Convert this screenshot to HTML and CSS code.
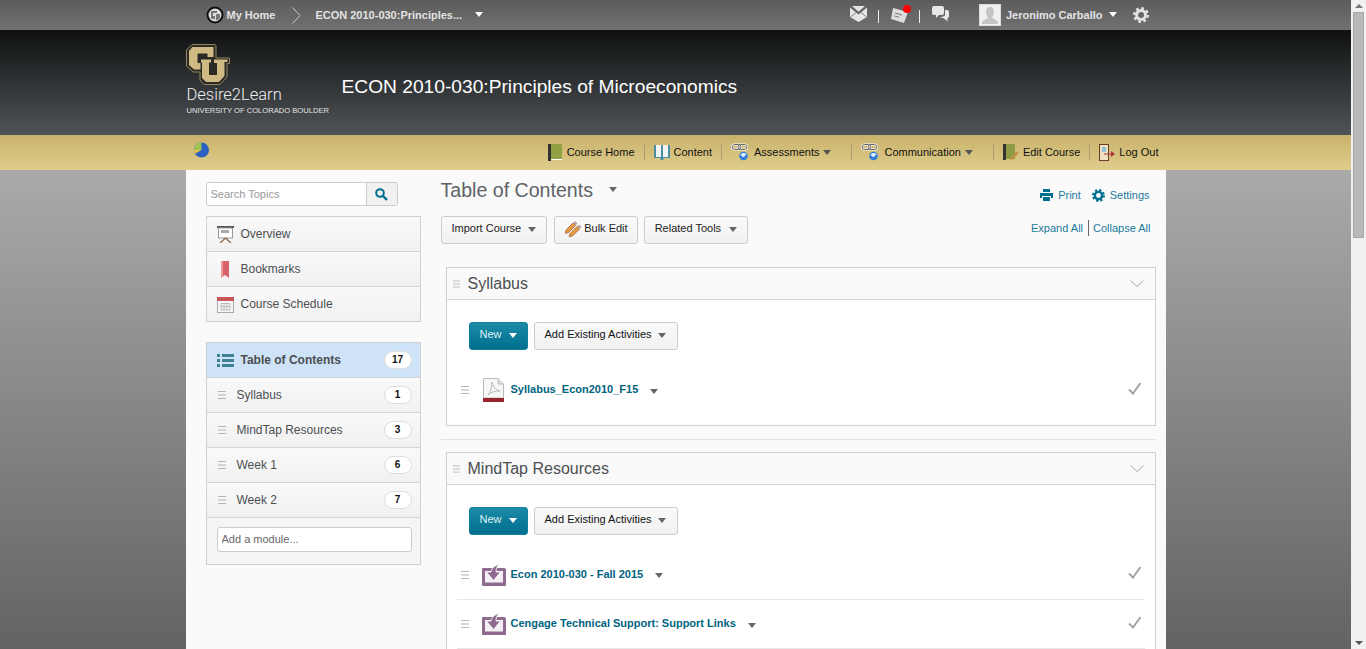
FILE: index.html
```html
<!DOCTYPE html>
<html>
<head>
	<meta charset="utf-8">
	<title>Table of Contents - ECON 2010-030:Principles of Microeconomics</title>
	<link rel="stylesheet" href="styles.css">
</head>
<body>

<svg class="defs" width="0" height="0">
	<symbol id="ico-handle" viewBox="0 0 8 8"><path d="M0 .5H8M0 4H8M0 7.500H8" stroke="#b5b5b5" fill="none"/></symbol>
	<symbol id="ico-check" viewBox="0 0 14 13"><path d="M1 7.500L5 11.500L12.500 1" stroke="#a3a3a3" stroke-width="2" fill="none"/></symbol>
	<symbol id="ico-chevron" viewBox="0 0 14 8"><path d="M.5 .5L7 6.500L13.500 .5" stroke="#a8a8a8" fill="none"/></symbol>
	<symbol id="ico-import" viewBox="0 0 24 22">
		<path d="M1 4H22Q24 4 24 6V21Q24 22 23 22H1Q0 22 0 21V5Q0 4 1 4Z" fill="#8f6a8f"/>
		<rect x="3" y="7" width="18" height="11.500" fill="#f4eff4"/>
		<path d="M17.500 0C12 2 9 5 9 8H4.500L11.500 16.500L18.500 8H14C14 5 15 2 17.500 0Z" fill="#8f6a8f" stroke="#fff" stroke-width=".8"/>
	</symbol>
	<symbol id="ico-chain" viewBox="0 0 18 20">
		<rect x="1" y="2.500" width="9" height="5" rx="2.500" fill="none" stroke="#fff" stroke-width="2"/>
		<rect x="7" y="2.500" width="9" height="5" rx="2.500" fill="none" stroke="#fff" stroke-width="2"/>
		<rect x="7" y="2.500" width="9" height="5" rx="2.500" fill="none" stroke="#666"/>
		<rect x="1" y="2.500" width="9" height="5" rx="2.500" fill="none" stroke="#666"/>
		<circle cx="12.500" cy="14" r="4.300" fill="#2f7fd6"/>
		<path d="M9.500 13C11 10.500 14 10.500 15.500 12.500C14 12.500 14 15 12.500 15C11 15 11 14 9.500 13Z" fill="#dfefff"/>
	</symbol>
	<symbol id="ico-gear" viewBox="0 0 16 16">
		<circle cx="8" cy="8" r="4.500" fill="none" stroke="currentColor" stroke-width="3"/>
		<circle cx="8" cy="8" r="6.800" fill="none" stroke="currentColor" stroke-width="2.400" stroke-dasharray="2.800 2.540"/>
	</symbol>
</svg>

<div class="scroll-falso">
	<span class="scroll-sube"></span>
	<span class="scroll-mango"></span>
	<span class="scroll-baja"></span>
</div>

<div class="barra-top">
	<div class="ancho barra-top-in">
		<span class="logo-home">
			<svg width="18" height="18" viewBox="0 0 18 18"><circle cx="9" cy="9" r="8.500" fill="#111"/><circle cx="9" cy="9" r="6.500" fill="#ddd"/><path d="M5 5H11V7H7V10H9V13H6L5 12ZM9 8H14V12L12 14H10V8Z" fill="#777"/></svg>
		</span>
		<span class="top-link mi-home">My Home</span>
		<svg class="top-sep" width="9" height="17" viewBox="0 0 9 17"><path d="M.5 .5L8 8.500L.5 16.500" stroke="#ccc" fill="none"/></svg>
		<span class="top-link curso">ECON 2010-030:Principles...</span>
		<span class="flecha flecha-blanca flecha-curso"></span>

		<div class="top-der">
			<svg class="ico-sobre" width="17" height="16" viewBox="0 0 17 16"><path d="M0 1.500L8.500 8.500L17 1.500V11L8.500 16L0 11Z M2 0H15L8.500 5.800Z" fill="#e6e6e6"/><path d="M.5 11L6 6.500M16.500 11L11 6.500" stroke="#666" stroke-width=".8"/></svg>
			<span class="barrita"></span>
			<span class="ico-aviso">
				<svg width="20" height="17" viewBox="0 0 20 17"><path d="M2 2L17 6L13 17L0 13Z" fill="#dedede"/><path d="M4 7L11 9M3.500 10L8 11.300" stroke="#777"/></svg>
				<span class="punto-rojo"></span>
			</span>
			<span class="barrita"></span>
			<svg class="ico-chat" width="17" height="16" viewBox="0 0 17 16"><path d="M2 0H10Q12 0 12 2V7Q12 9 10 9H7L4 12V9H2Q0 9 0 7V2Q0 0 2 0Z" fill="#e6e6e6"/><path d="M13 4H15Q17 4 17 6V10Q17 12 15.500 12V15.500L11.500 12H8L13 9.500Z" fill="#e6e6e6"/></svg>
			<span class="avatar">
				<svg width="20" height="20" viewBox="0 0 20 20"><path d="M10 2C13 2 14 4 14 7C14 10 12 12 12 13C14 14 17 15 18 17V19H2V17C3 15 6 14 8 13C8 12 6 10 6 7C6 4 7 2 10 2Z" fill="#c4c4c4"/></svg>
			</span>
			<span class="top-link nombre">Jeronimo Carballo</span>
			<span class="flecha flecha-blanca flecha-nombre"></span>
			<svg class="ico-tuerca" width="16" height="16"><use href="#ico-gear"/></svg>
		</div>
	</div>
</div>

<div class="cabecera">
	<div class="ancho cabecera-in">
		<div class="marca">
			<svg class="cu" width="44" height="41" viewBox="0 0 44 41">
				<path d="M6 .5H29L30 2V14H43.500V19.500H41V33L34 40.500H18L14 36V28H7L.5 22V6Z" fill="#2b2a27" stroke="#94875f"/>
				<path d="M6.500 3H27.500V13H21.500V9.500H11.500V19H14.500V25.500H8L3 21V7Z" fill="#cfba83"/>
				<path d="M15 15.500H25V18.500H23V31H31V19H28V15.500H41.500V18H38.500V32L33 38H20L16 34V18.500H15Z" fill="#cfba83"/>
			</svg>
			<div class="marca-nombre">Desire2Learn</div>
			<div class="marca-uni">UNIVERSITY OF COLORADO BOULDER</div>
		</div>
		<div class="titulo-curso">ECON 2010-030:Principles of Microeconomics</div>
	</div>
</div>

<div class="nav">
	<div class="ancho nav-in">
		<svg class="pastel" width="17" height="16" viewBox="0 0 17 16"><circle cx="8.500" cy="8" r="7.500" fill="#2b5fc0"/><path d="M8.500 8V.5A7.500 7.500 0 0 0 1 8Z" fill="#9bc453"/><path d="M8.500 8H1A7.500 7.500 0 0 0 2 11.700Z" fill="#e8c04a"/></svg>
		<ul class="nav-lista">
			<li class="nav-item">
				<svg class="nav-libro" width="14" height="17" viewBox="0 0 14 17"><rect width="14" height="16" fill="#93a044"/><rect width="3" height="17" fill="#333"/><rect x="3" y="15" width="11" height="1" fill="#fff"/></svg>
				Course Home
			</li>
			<li class="nav-item">
				<svg width="16" height="16" viewBox="0 0 16 16"><path d="M0 1H16V14H9.500V16H6.500V14H0Z" fill="#4d8ea6"/><path d="M2 1H7V13H2ZM9 1H14V13H9Z" fill="#f3f3f3"/></svg>
				Content
			</li>
			<li class="nav-item">
				<svg width="18" height="20"><use href="#ico-chain"/></svg>
				<span class="nav-txt-ico">Assessments</span>
				<span class="flecha flecha-nav"></span>
			</li>
			<li class="nav-item">
				<svg width="18" height="20"><use href="#ico-chain"/></svg>
				<span class="nav-txt-ico">Communication</span>
				<span class="flecha flecha-nav"></span>
			</li>
			<li class="nav-item">
				<svg width="16" height="17" viewBox="0 0 16 17"><rect width="12" height="15" fill="#8d9c43"/><rect width="3" height="16" fill="#333"/><path d="M7 15L14 7L16 9L9 16Z" fill="#c8914a"/></svg>
				Edit Course
			</li>
			<li class="nav-item">
				<svg width="16" height="17" viewBox="0 0 16 17"><rect x=".5" y=".5" width="9" height="16" fill="#eee0c0" stroke="#6b3b2a"/><rect x="3" y="3" width="4" height="5" fill="#8fc3d6"/><path d="M5 9.500H12V7L16 10L12 13V10.500H5Z" fill="#b3303c"/></svg>
				Log Out
			</li>
		</ul>
	</div>
</div>

<div class="fondo">
	<div class="ancho pagina">

		<div class="lateral">
			<div class="buscador">
				<input class="buscador-txt" type="text" placeholder="Search Topics">
				<span class="buscador-btn">
					<svg width="13" height="13" viewBox="0 0 13 13"><circle cx="5" cy="5" r="3.800" fill="none" stroke="#00708f" stroke-width="2"/><path d="M8 8L12 12" stroke="#00708f" stroke-width="2.400"/></svg>
				</span>
			</div>

			<ul class="caja-lateral">
				<li class="fila">
					<svg class="fila-ico" width="17" height="17" viewBox="0 0 17 17"><rect width="17" height="2" fill="#555"/><rect x="1.500" y="2" width="14" height="10" fill="#fff" stroke="#999"/><rect x="4" y="4" width="8" height="3" fill="#aaa"/><path d="M8.500 12L3 17M8.500 12L14 17" stroke="#8a6a50" stroke-width="1.300"/></svg>
					Overview
				</li>
				<li class="fila">
					<svg class="fila-ico" width="17" height="17" viewBox="0 0 17 17"><path d="M4 0H12V17L8 14L4 17Z" fill="#d9626a"/><path d="M4 0H6V15.500L4 17Z" fill="#e99"/></svg>
					Bookmarks
				</li>
				<li class="fila">
					<svg class="fila-ico" width="17" height="17" viewBox="0 0 17 17"><rect x=".5" y="1.500" width="16" height="15" fill="#f6f6f6" stroke="#aaa"/><rect y="1" width="17" height="4" fill="#c9565b"/><path d="M4 7.500H13V14H4ZM7 7.500V14M10 7.500V14M4 10.500H13" fill="none" stroke="#bbb"/></svg>
					Course Schedule
				</li>
			</ul>

			<ul class="caja-lateral caja-modulos">
				<li class="fila fila-toc">
					<svg class="fila-ico" width="17" height="13" viewBox="0 0 17 13"><path d="M0 0H3V3H0ZM0 5H3V8H0ZM0 10H3V13H0ZM5 0H17V3H5ZM5 5H17V8H5ZM5 10H17V13H5Z" fill="#3f8294"/></svg>
					<span class="fila-nombre">Table of Contents</span>
					<span class="cuenta">17</span>
				</li>
				<li class="fila fila-mod">
					<svg class="asa" width="8" height="8"><use href="#ico-handle"/></svg>
					<span class="fila-nombre">Syllabus</span>
					<span class="cuenta">1</span>
				</li>
				<li class="fila fila-mod">
					<svg class="asa" width="8" height="8"><use href="#ico-handle"/></svg>
					<span class="fila-nombre">MindTap Resources</span>
					<span class="cuenta">3</span>
				</li>
				<li class="fila fila-mod">
					<svg class="asa" width="8" height="8"><use href="#ico-handle"/></svg>
					<span class="fila-nombre">Week 1</span>
					<span class="cuenta">6</span>
				</li>
				<li class="fila fila-mod">
					<svg class="asa" width="8" height="8"><use href="#ico-handle"/></svg>
					<span class="fila-nombre">Week 2</span>
					<span class="cuenta">7</span>
				</li>
				<li class="fila-nuevo">
					<input class="nuevo-txt" type="text" placeholder="Add a module...">
				</li>
			</ul>
		</div>

		<div class="principal">
			<div class="princ-cab">
				<h1 class="princ-titulo">Table of Contents</h1>
				<span class="flecha flecha-titulo"></span>
				<div class="princ-acciones">
					<svg width="13" height="12" viewBox="0 0 13 12"><path d="M3 0H10V3H3ZM0 4H13V9H11V7H2V9H0ZM3 8H10V12H3Z" fill="#00708f"/></svg>
					<a class="enlace enlace-print">Print</a>
					<svg class="ico-ajustes" width="13" height="13" viewBox="0 0 16 16"><use href="#ico-gear"/></svg>
					<a class="enlace">Settings</a>
				</div>
			</div>

			<div class="princ-botones">
				<span class="boton boton-import">Import Course <span class="flecha flecha-boton"></span></span>
				<span class="boton boton-bulk">
					<svg width="17" height="17" viewBox="0 0 17 17">
						<path d="M1 10L8 3L10.500 5.500L3.500 12.500L0 13.500Z" fill="#e29a3c" stroke="#a8563a" stroke-width=".7"/>
						<path d="M8 3L10 1L12.500 3.500L10.500 5.500Z" fill="#b9a0a0"/>
						<path d="M5 13.500L12 6.500L14.500 9L7.500 16L4 17Z" fill="#e29a3c" stroke="#a8563a" stroke-width=".7"/>
						<path d="M12 6.500L14 4.500L16.500 7L14.500 9Z" fill="#b9a0a0"/>
					</svg>
					Bulk Edit
				</span>
				<span class="boton boton-rel">Related Tools <span class="flecha flecha-boton"></span></span>
				<div class="expandir">
					<a class="enlace">Expand All</a>
					<span class="expandir-sep"></span>
					<a class="enlace">Collapse All</a>
				</div>
			</div>

			<div class="modulo">
				<div class="modulo-cab">
					<svg class="asa-cab" width="7" height="8"><use href="#ico-handle"/></svg>
					<h2 class="modulo-titulo">Syllabus</h2>
					<svg class="modulo-abrir" width="14" height="8"><use href="#ico-chevron"/></svg>
				</div>
				<div class="modulo-cuerpo">
					<div class="modulo-botones">
						<span class="boton boton-nuevo">New <span class="flecha flecha-blanca flecha-boton"></span></span>
						<span class="boton boton-negro">Add Existing Activities <span class="flecha flecha-boton"></span></span>
					</div>
					<div class="tema tema-pdf">
						<svg class="asa" width="8" height="8"><use href="#ico-handle"/></svg>
						<svg class="tema-ico" width="21" height="24" viewBox="0 0 21 24"><path d="M.5 .5H15L20.500 6V20H.5Z" fill="#f7f7f7" stroke="#bbb"/><path d="M15 .5V6H20.500" fill="#ddd" stroke="#bbb"/><path d="M5 17C8 14 9 8 9 4C10 9 13 12 17 13C12 13 8 14 5 17Z" fill="none" stroke="#bbb"/><rect y="20" width="21" height="4" fill="#98252b"/></svg>
						<a class="tema-nombre">Syllabus_Econ2010_F15</a>
						<span class="flecha flecha-tema"></span>
						<svg class="tema-check" width="14" height="13"><use href="#ico-check"/></svg>
					</div>
				</div>
			</div>

			<div class="separador"></div>

			<div class="modulo">
				<div class="modulo-cab">
					<svg class="asa-cab" width="7" height="8"><use href="#ico-handle"/></svg>
					<h2 class="modulo-titulo">MindTap Resources</h2>
					<svg class="modulo-abrir" width="14" height="8"><use href="#ico-chevron"/></svg>
				</div>
				<div class="modulo-cuerpo">
					<div class="modulo-botones">
						<span class="boton boton-nuevo">New <span class="flecha flecha-blanca flecha-boton"></span></span>
						<span class="boton boton-negro">Add Existing Activities <span class="flecha flecha-boton"></span></span>
					</div>
					<div class="tema tema-lista">
						<svg class="asa" width="8" height="8"><use href="#ico-handle"/></svg>
						<svg class="tema-ico tema-ico-imp" width="24" height="22"><use href="#ico-import"/></svg>
						<a class="tema-nombre">Econ 2010-030 - Fall 2015</a>
						<span class="flecha flecha-tema"></span>
						<svg class="tema-check" width="14" height="13"><use href="#ico-check"/></svg>
					</div>
					<div class="tema tema-lista">
						<svg class="asa" width="8" height="8"><use href="#ico-handle"/></svg>
						<svg class="tema-ico tema-ico-imp" width="24" height="22"><use href="#ico-import"/></svg>
						<a class="tema-nombre">Cengage Technical Support: Support Links</a>
						<span class="flecha flecha-tema"></span>
						<svg class="tema-check" width="14" height="13"><use href="#ico-check"/></svg>
					</div>
				</div>
			</div>
		</div>

	</div>
</div>

</body>
</html>
```

FILE: styles.css
```css
*{box-sizing: border-box;}
html{height: 100%; background: #666;}
body{
	margin: 0 15px 0 0;
	font-family: "Liberation Sans", Arial, sans-serif;
	font-size: 12px;
	color: #565a5c;
}
ul{list-style: none; margin: 0; padding: 0;}
h1, h2{margin: 0; font-weight: normal;}
svg{display: block; flex: none;}
.defs{position: absolute;}

/* barra de scroll, va encima de todo */
.scroll-falso{
	position: fixed;
	top: 0;
	right: 0;
	bottom: 0;
	width: 15px;
	background: #f1f1f1;
	display: flex;
	flex-direction: column;
	align-items: center;
}
.scroll-sube{margin-top: 4px; border-style: solid; border-width: 0 4px 4px; border-color: transparent transparent #777;}
.scroll-mango{width: 11px; height: 226px; margin-top: 4px; background: #b9b9b9; border: 1px solid #a8a8a8;}
.scroll-baja{margin-top: auto; margin-bottom: 4px; border-style: solid; border-width: 4px 4px 0; border-color: #555 transparent transparent;}

.ancho{width: 980px; margin: 0 auto; display: flex;}

/* triangulos */
.flecha{
	display: inline-block;
	width: 0;
	height: 0;
	border-style: solid;
	border-width: 5px 4.5px 0;
	border-color: #666 transparent transparent;
}
.flecha-blanca{border-top-color: #fff;}

/* barra de arriba */
.barra-top{height: 30px; background: linear-gradient(#5c5c5c, #717171);}
.barra-top-in{height: 30px; align-items: center; padding-left: 20px;}
.top-link{font-weight: bold; font-size: 11px; color: #e2e2e2;}
.mi-home{margin-left: 3px;}
.top-sep{margin-left: 17px;}
.curso{margin-left: 14px;}
.flecha-curso{margin-left: 13px; margin-top: -2px;}
.top-der{margin-left: auto; display: flex; align-items: center; padding-right: 17px;}
.barrita{width: 1px; height: 13px; background: #eee; margin-top: 3px;}
.ico-sobre{margin-right: 11px; margin-top: -3px;}
.ico-aviso{position: relative; margin: -2px 8px 0 12px; width: 20px; height: 17px;}
.punto-rojo{position: absolute; top: -1px; right: 0; width: 8px; height: 8px; border-radius: 50%; background: #f00;}
.ico-chat{margin-left: 12px; margin-top: -3px;}
.avatar{width: 22px; height: 22px; margin-left: 30px; background: #f0f0f0; display: flex; align-items: center; justify-content: center; border: 1px solid #ddd;}
.nombre{margin-left: 5px;}
.flecha-nombre{margin-left: 6px; margin-top: -1px;}
.ico-tuerca{margin-left: 16px; color: #e2e2e2;}

/* cabecera */
.cabecera{height: 105px; background: linear-gradient(#0f1111, #505458);}
.cabecera-in{height: 105px; align-items: center;}
.marca{width: 156px; padding-top: 14px; align-self: flex-start;}
.marca-nombre{font-family: Roboto, "Liberation Sans", sans-serif; font-weight: 300; font-size: 16.500px; color: #efefef; line-height: 20px; margin: 0 0 0 1px;}
.marca-uni{font-size: 7.600px; color: #e4e4e4; line-height: 10px; margin: 1px 0 0 1px; white-space: nowrap;}
.titulo-curso{font-size: 19.200px; color: #fff; margin-top: 9px;}

/* menu dorado */
.nav{height: 35px; background: linear-gradient(#c9b26b, #dfcd8c);}
.nav-in{height: 35px; align-items: flex-start; padding-left: 7px;}
.pastel{margin-top: 7px;}
.nav-lista{margin-left: auto; display: flex; padding: 9px 0 0 0;}
.nav-item{display: flex; align-items: center; height: 16px; font-size: 11px; color: #111; gap: 4px; padding: 0 9px; border-left: 1px solid #a99c6f; white-space: nowrap;}
.nav-item:first-child{border-left: 0;}
.nav-item:last-child{padding-right: 7px;}
.nav-libro{margin-right: 1px;}
.nav-txt-ico{margin-left: 1px;}
.flecha-nav{border-top-color: #555; margin: 1px 11px 0 0;}

/* pagina */
.fondo{background: linear-gradient(#aaa, #636363) no-repeat; background-size: 100% 479px; min-height: 1615px;}
.pagina{background: #fafafa; min-height: 1615px; padding: 12px 10px 0 20px; gap: 20px; align-items: flex-start;}

/* lateral */
.lateral{width: 215px; flex: none;}
.buscador{display: flex; width: 192px; height: 24px; border: 1px solid #ccc; border-radius: 3px; background: #fff; margin-bottom: 10px;}
.buscador-txt{flex: 1; min-width: 0; border: 0; background: transparent; padding: 0 4px; font: 11px "Liberation Sans", sans-serif; outline: none;}
.buscador-txt::placeholder{color: #999;}
.buscador-btn{width: 31px; background: #f1f1f1; border-left: 1px solid #ccc; display: flex; align-items: center; justify-content: center; border-radius: 0 3px 3px 0;}
.caja-lateral{border: 1px solid #d0d0d0; background: #f5f5f5;}
.caja-modulos{margin-top: 20px;}
.fila{height: 35px; display: flex; align-items: center; padding-left: 10px; gap: 7px; border-top: 1px solid #d5d5d5; background: linear-gradient(#f9f9f9, #f1f1f1); color: #4c4f52;}
.fila:first-child{border-top: 0; height: 34px;}
.fila-toc{background: #cfe3f8; font-weight: bold;}
.fila-mod{padding-left: 11px; gap: 11px;}
.fila-nombre{flex: 1;}
.cuenta{width: 28px; height: 18px; margin-right: 8px; background: #fff; border: 1px solid #ddd; border-radius: 9px; text-align: center; font-size: 10px; font-weight: bold; line-height: 15px; color: #111;}
.fila-nuevo{padding: 9px 10px 0; border-top: 1px solid #d5d5d5; height: 47px;}
.nuevo-txt{display: block; width: 195px; height: 25px; border: 1px solid #ccc; border-radius: 3px; background: #fff; padding: 0 4px 2px; font: 11px "Liberation Sans", sans-serif; outline: none;}
.nuevo-txt::placeholder{color: #666;}

/* principal */
.principal{flex: 1; min-width: 0;}
.princ-cab{display: flex; align-items: center; height: 24px; margin: -4px 0 14px;}
.princ-titulo{font-size: 19.600px; color: #5f6366;}
.flecha-titulo{margin-left: 16px; margin-top: -2px;}
.princ-acciones{margin-left: auto; display: flex; align-items: center; padding: 10px 6px 0 0;}
.enlace{font-size: 11px; color: #1b7a9b;}
.enlace-print{margin-left: 5px;}
.ico-ajustes{margin-left: 11px; margin-right: 5px; color: #00708f;}
.princ-botones{display: flex; align-items: center; gap: 7px; margin-bottom: 23px;}
.boton{display: inline-flex; align-items: center; height: 28px; padding: 0 10px 4px; border: 1px solid #ccc; border-radius: 3px; background: linear-gradient(#fafafa, #f1f1f1); font-size: 11px; color: #222; white-space: nowrap;}
.boton-bulk{gap: 2px; padding-right: 9px;}
.boton-rel{margin-left: -1px;}
.flecha-boton{margin-left: 6px; margin-top: 3px;}
.boton-import .flecha-boton, .boton-nuevo .flecha-boton{margin-left: 7px;}
.boton-rel .flecha-boton{margin-left: 8px;}
.expandir{margin-left: auto; display: flex; align-items: center; padding: 0 5px 4px 0;}
.expandir-sep{width: 1px; height: 16px; background: #666; margin: 0 4px 0 5px;}

.modulo{margin-left: 5px; border: 1px solid #d0d0d0; background: #fff;}
.modulo-cab{height: 32px; display: flex; align-items: center; padding: 0 11px 0 6px; background: #f9f9f9; border-bottom: 1px solid #d5d5d5;}
.asa-cab{margin-right: 8px;}
.modulo-titulo{font-size: 16px; color: #4c4f52;}
.modulo-abrir{margin-left: auto;}
.modulo-cuerpo{padding: 22px 10px 0;}
.modulo-botones{display: flex; gap: 6px; padding-left: 12px;}
.boton-nuevo{background: linear-gradient(#1b8ba8, #006f8d); border-color: #0f7f9b; color: #dff1f6;}
.boton-negro{color: #111; padding-right: 11px;}
.tema{display: flex; align-items: center;}
.tema-pdf{margin-top: 28px; padding-bottom: 23px; padding-left: 4px;}
.tema-lista{height: 49px; padding-left: 4px; border-bottom: 1px solid #e8e8e8;}
.modulo-botones + .tema-lista{margin-top: 15px; height: 50px;}
.tema-ico{margin-left: 14px;}
.tema-ico-imp{margin-left: 13px; margin-right: -2px;}
.tema-nombre{margin: -2px 0 0 7px; font-weight: bold; font-size: 11px; color: #00637f;}
.flecha-tema{margin-left: 12px; margin-top: 2px;}
.tema-check{margin-left: auto; margin-right: 3px; margin-top: -4px;}
.separador{height: 1px; background: #e3e3e3; margin: 13px 0 12px;}
```
